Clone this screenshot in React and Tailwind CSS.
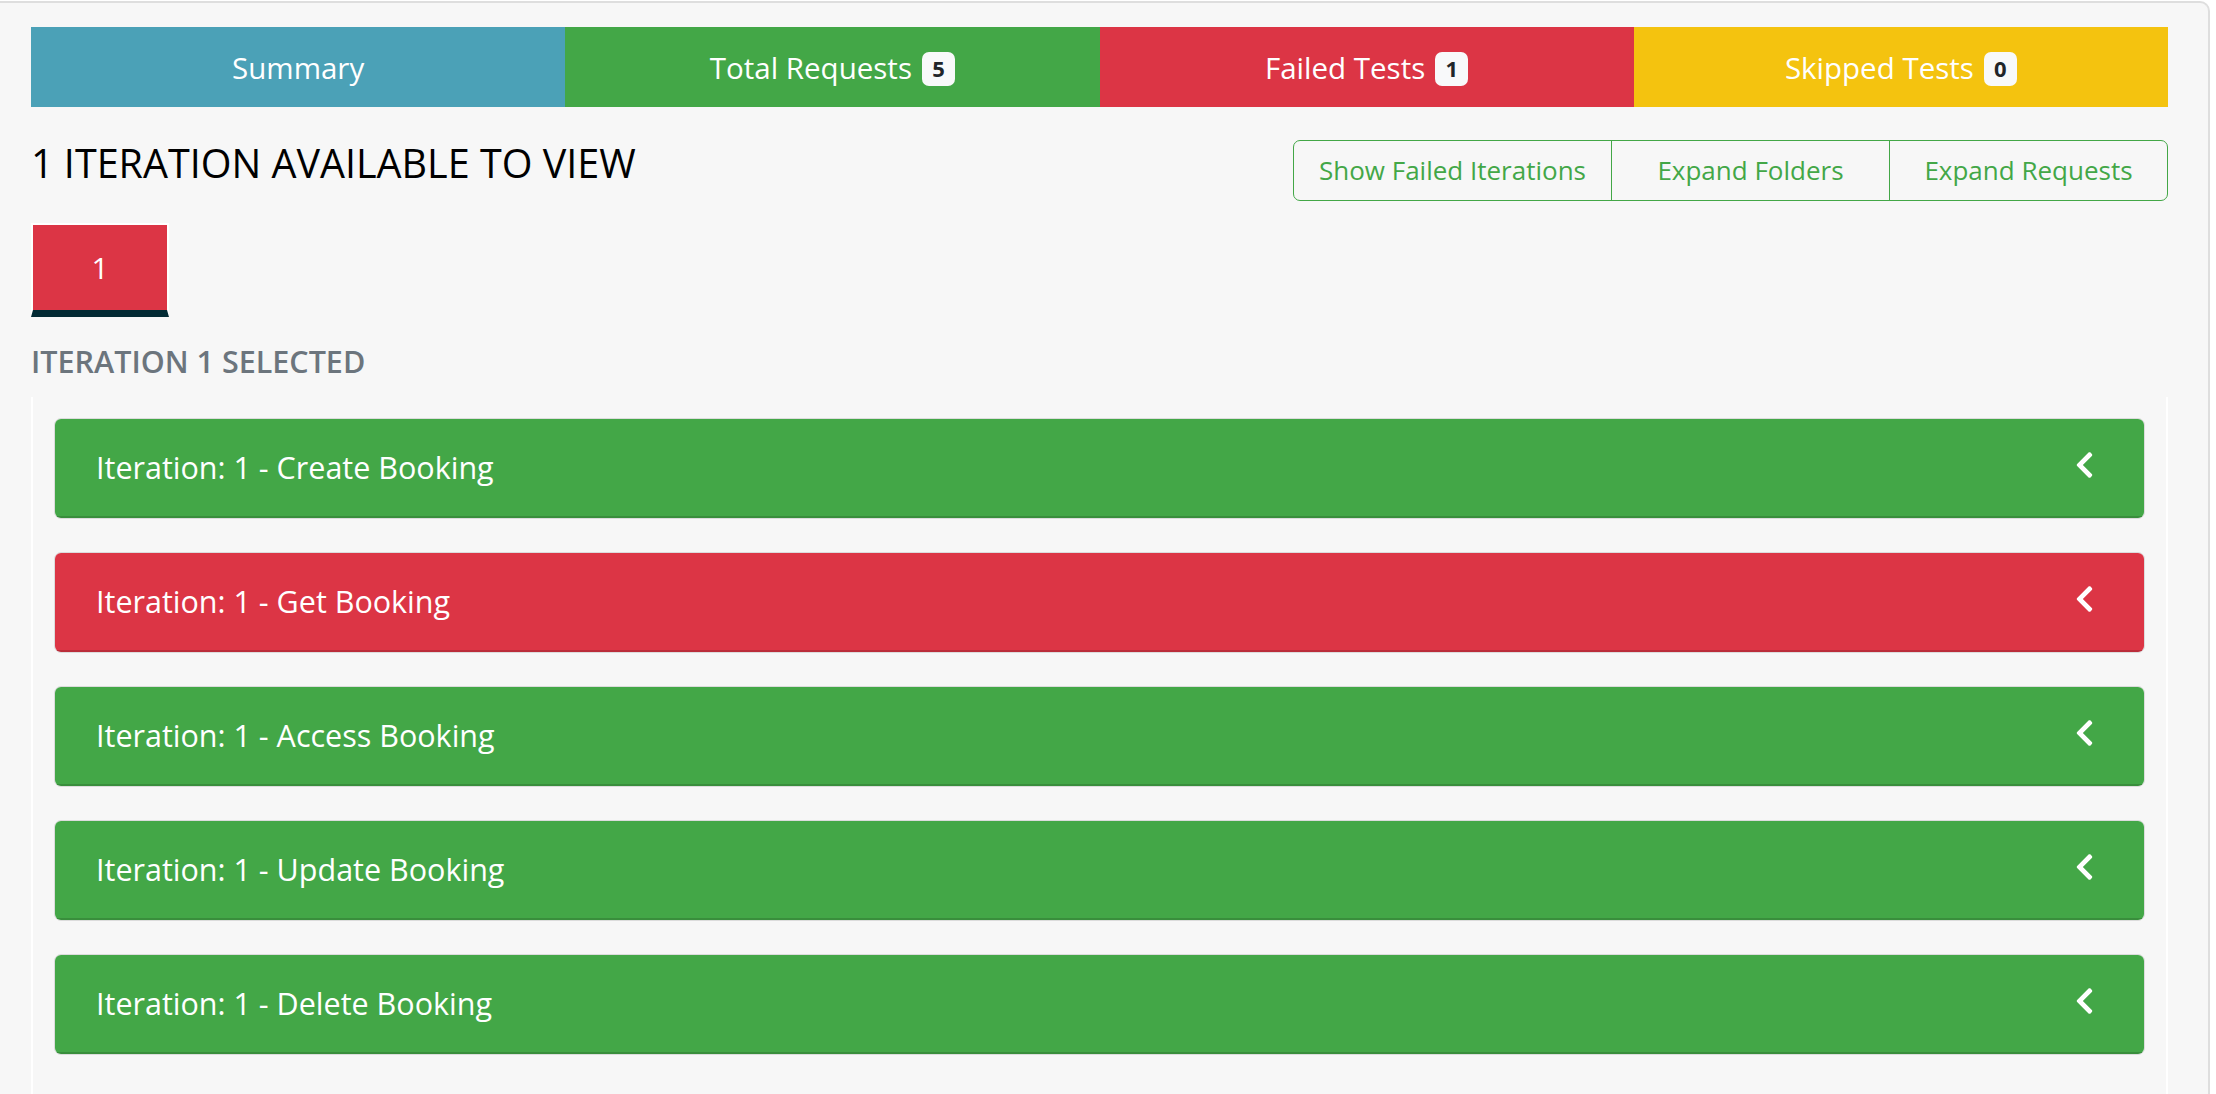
import React from 'react';

// Result tabs across the top
const tabs = [
  { label: 'Summary', bg: 'bg-[#4ba1b7]' },
  { label: 'Total Requests', count: 5, bg: 'bg-[#43a747]' },
  { label: 'Failed Tests', count: 1, bg: 'bg-[#dc3545]' },
  { label: 'Skipped Tests', count: 0, bg: 'bg-[#f4c30f]' },
];

const requests = [
  { name: 'Create Booking', failed: false },
  { name: 'Get Booking', failed: true },
  { name: 'Access Booking', failed: false },
  { name: 'Update Booking', failed: false },
  { name: 'Delete Booking', failed: false },
];

function Chevron() {
  return (
    <svg viewBox="0 0 320 512" className="h-[30px] w-[19px] fill-white -mt-[4px]">
      <path d="M34.52 239.03L228.87 44.69c9.37-9.37 24.57-9.37 33.94 0l22.67 22.67c9.36 9.36 9.370 24.52.04 33.9L131.49 256l154.02 154.75c9.34 9.38 9.32 24.54-.04 33.9l-22.67 22.67c-9.37 9.37-24.57 9.37-33.94 0L34.52 272.97c-9.37-9.37-9.37-24.57 0-33.94z" />
    </svg>
  );
}

export default function App() {
  return (
    <div className="min-h-screen bg-white font-['Open_Sans',sans-serif] pt-[1px]">
      <div className="w-[2210px] min-h-[1093px] bg-[#f7f7f7] border-t-2 border-r-2 border-[#dedede] rounded-tr-[10px] pl-[31px] pr-[40px] pt-[24px]">
        {/* Tabs */}
        <div className="grid grid-cols-4 h-[80px]">
          {tabs.map(({ label, count, bg }) => (
            <div key={label} className={`${bg} flex items-center justify-center pt-[3px] text-white text-[29.5px]`}>
              <span>{label}</span>
              {count !== undefined && (
                <span className="ml-[10px] h-[34px] min-w-[33px] px-[8px] rounded-[7px] bg-[#f8f9fa] text-[#212529] text-[22px] font-bold flex items-center justify-center">
                  {count}
                </span>
              )}
            </div>
          ))}
        </div>

        {/* Heading + buttons */}
        <div className="flex justify-between items-start mt-[33px]">
          <h4 className="text-[39.5px] leading-[1.2] font-medium text-black">1 ITERATION AVAILABLE TO VIEW</h4>
          <div className="flex h-[61px] border-[1.5px] border-[#43a747] rounded-[7px] text-[#43a747] text-[26px]">
            <button className="w-[318px] border-r-[1.5px] border-[#43a747]">Show Failed Iterations</button>
            <button className="w-[278px] border-r-[1.5px] border-[#43a747]">Expand Folders</button>
            <button className="w-[277px]">Expand Requests</button>
          </div>
        </div>

        {/* Iteration picker */}
        <div className="mt-[22px] w-[138px] h-[94px] bg-[#dc3545] border-2 border-white border-b-[7px] border-b-[#022a34] flex items-center justify-center text-white text-[30px]">
          1
        </div>

        <h5 className="mt-[26px] text-[30.5px] leading-[1.2] font-semibold text-[#6c757d]">ITERATION 1 SELECTED</h5>

        {/* Requests accordion */}
        <div className="mt-[17px] border-x-2 border-white pt-[21px] px-[21px] pb-[40px] flex flex-col gap-[33px]">
          {requests.map(({ name, failed }) => (
            <div key={name} className="rounded-[7px] border-[1.5px] border-[#dcdcdc] overflow-hidden">
              <div
                className={`h-[99px] flex items-center justify-between pl-[41px] pr-[50px] text-white text-[30.5px] border-b-2 border-black/15 ${
                  failed ? 'bg-[#dc3545]' : 'bg-[#43a747]'
                }`}
              >
                <span className="pt-[2px]">Iteration: 1 - {name}</span>
                <Chevron />
              </div>
            </div>
          ))}
        </div>
      </div>
    </div>
  );
}
